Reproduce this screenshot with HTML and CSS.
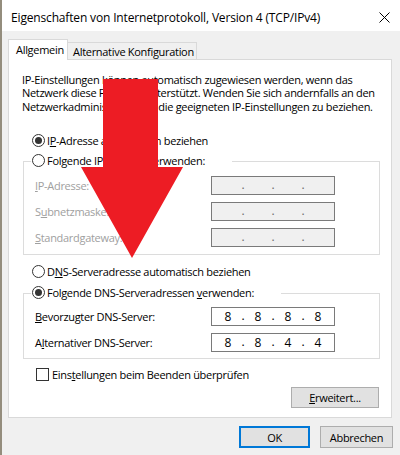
FILE: index.html
```html
<!DOCTYPE html>
<html lang="de">
<head>
<meta charset="utf-8">
<title>Eigenschaften von Internetprotokoll, Version 4 (TCP/IPv4)</title>
<link rel="stylesheet" href="styles.css">
</head>
<body>
<div class="window">
  <div class="titlebar">
    <span class="title">Eigenschaften von Internetprotokoll, Version 4 (TCP/IPv4)</span>
    <svg class="close" width="11" height="11" viewBox="0 0 11 11"><path d="M0.5 0.5 L10.5 10.5 M10.5 0.5 L0.5 10.5" stroke="#000" stroke-width="1" fill="none"/></svg>
  </div>
  <div class="content">
    <div class="tabs">
      <div class="tab active">Allgemein</div>
      <div class="tab">Alternative Konfiguration</div>
    </div>
    <div class="panel">
      <p class="intro">IP-Einstellungen können automatisch zugewiesen werden, wenn das<br>Netzwerk diese Funktion unterstützt. Wenden Sie sich andernfalls an den<br>Netzwerkadministrator, um die geeigneten IP-Einstellungen zu beziehen.</p>

      <div class="radio-row first">
        <span class="radio checked"></span>
        <span>I<u>P</u>-Adresse automatisch beziehen</span>
      </div>

      <div class="group ip-group">
        <div class="legend">
          <span class="radio"></span>
          <span>Folgende IP-Adresse <u>v</u>erwenden:</span>
        </div>
        <div class="field-row">
          <span class="label disabled"><u>I</u>P-Adresse:</span>
          <div class="ip disabled"><span></span><span class="dot">.</span><span></span><span class="dot">.</span><span></span><span class="dot">.</span><span></span></div>
        </div>
        <div class="field-row">
          <span class="label disabled">S<u>u</u>bnetzmaske:</span>
          <div class="ip disabled"><span></span><span class="dot">.</span><span></span><span class="dot">.</span><span></span><span class="dot">.</span><span></span></div>
        </div>
        <div class="field-row">
          <span class="label disabled"><u>S</u>tandardgateway:</span>
          <div class="ip disabled"><span></span><span class="dot">.</span><span></span><span class="dot">.</span><span></span><span class="dot">.</span><span></span></div>
        </div>
      </div>

      <div class="radio-row dns-auto">
        <span class="radio"></span>
        <span>D<u>N</u>S-Serveradresse automatisch beziehen</span>
      </div>

      <div class="group dns-group">
        <div class="legend">
          <span class="radio checked"></span>
          <span>Folgende DNS-Serveradressen <u>v</u>erwenden:</span>
        </div>
        <div class="field-row">
          <span class="label"><u>B</u>evorzugter DNS-Server:</span>
          <div class="ip"><span>8</span><span class="dot">.</span><span>8</span><span class="dot">.</span><span>8</span><span class="dot">.</span><span>8</span></div>
        </div>
        <div class="field-row">
          <span class="label">A<u>l</u>ternativer DNS-Server:</span>
          <div class="ip"><span>8</span><span class="dot">.</span><span>8</span><span class="dot">.</span><span>4</span><span class="dot">.</span><span>4</span></div>
        </div>
      </div>

      <div class="check-row">
        <span class="checkbox"></span>
        <span>Eins<u>t</u>ellungen beim Beenden überprüfen</span>
      </div>

      <div class="panel-actions">
        <button class="btn advanced"><u>E</u>rweitert...</button>
      </div>
    </div>
    <div class="actions">
      <button class="btn ok">OK</button>
      <button class="btn cancel">Abbrechen</button>
    </div>
  </div>
</div>
<svg class="arrow" width="400" height="455" viewBox="0 0 400 455"><polygon points="103,79 158,79 158,167 183,167 132,258 81,167 103,167" fill="#ed1c24"/></svg>
</body>
</html>
```

FILE: styles.css
```css
body {
  margin: 0;
  width: 400px;
  height: 455px;
  overflow: hidden;
  position: relative;
  background: #f0f0f0;
  font-family: "Open Sans", "Noto Sans", "DejaVu Sans", sans-serif;
  font-size: 11px;
  letter-spacing: -0.3px;
  color: #000;
}

.window {
  height: 455px;
  box-sizing: border-box;
  border-left: 2px solid #948d7d;
  display: flex;
  flex-direction: column;
}

.titlebar {
  height: 31px;
  box-sizing: border-box;
  padding: 4px 10px 0 9px;
  background: #fff;
  display: flex;
  align-items: center;
  justify-content: space-between;
}

.title {
  white-space: nowrap;
  font-size: 12px;
  letter-spacing: -0.16px;
}

.close {
  display: block;
}

.content {
  padding: 8px 0 0 6px;
}

.tabs {
  display: flex;
  align-items: flex-end;
  height: 20px;
}

.tab {
  box-sizing: border-box;
  height: 17px;
  width: 130px;
  margin-left: -1px;
  padding-left: 5px;
  border: 1px solid #d9d9d9;
  border-bottom: none;
  background: #f0f0f0;
  display: flex;
  align-items: center;
  white-space: nowrap;
}

.tab.active {
  width: 60px;
  height: 21px;
  margin-left: 0;
  margin-bottom: -1px;
  padding-left: 7px;
  background: #fff;
  position: relative;
  z-index: 1;
  padding-bottom: 1px;
}

.panel {
  box-sizing: border-box;
  width: 384px;
  height: 359px;
  border: 1px solid #d9d9d9;
  background: #fff;
  padding-left: 13px;
  display: flex;
  flex-direction: column;
  align-items: flex-start;
}

.intro {
  margin: 13px 0 0;
  line-height: 13.33px;
  white-space: nowrap;
}

.radio-row,
.check-row,
.legend {
  display: flex;
  align-items: center;
  height: 16px;
  white-space: nowrap;
}

.radio-row {
  margin-left: 10px;
  gap: 2px;
}

.radio-row.first {
  margin-top: 20px;
}

.radio-row.dns-auto {
  margin-top: 9px;
}

.radio {
  box-sizing: border-box;
  width: 13px;
  height: 13px;
  border: 1px solid #333;
  border-radius: 50%;
  background: #fff;
  display: flex;
  align-items: center;
  justify-content: center;
  flex: none;
}

.radio.checked::after {
  content: "";
  width: 7px;
  height: 7px;
  border-radius: 50%;
  background: #333;
}

.group {
  box-sizing: border-box;
  width: 357px;
  margin-left: 1px;
  border: 1px solid #dcdcdc;
  display: flex;
  flex-direction: column;
  align-items: flex-start;
}

.ip-group {
  margin-top: 12px;
  padding-bottom: 7px;
}

.dns-group {
  margin-top: 13px;
  padding-bottom: 6px;
}

.legend {
  margin-top: -9px;
  margin-left: 7px;
  padding: 0 27px 0 1px;
  background: #fff;
  gap: 2px;
}

.field-row {
  display: flex;
  align-items: center;
  height: 19px;
  margin-top: 7px;
  padding-left: 11px;
}

.ip-group .field-row:nth-child(2) {
  margin-top: 7px;
}

.dns-group .field-row:nth-child(2) {
  margin-top: 6px;
}

.label {
  width: 176px;
  white-space: nowrap;
}

.label.disabled {
  color: #a0a0a0;
}

.ip {
  box-sizing: border-box;
  width: 124px;
  height: 19px;
  border: 1px solid #7a7a7a;
  background: #fff;
  padding-left: 3px;
  display: grid;
  grid-template-columns: 26px 4px 26px 4px 26px 4px 26px;
  align-items: center;
  text-align: center;
  letter-spacing: 0;
  font-size: 12px;
}

.ip.disabled {
  background: #f0f0f0;
  color: #6d6d6d;
}

.dot {
  line-height: 1;
}

.check-row {
  margin-top: 8px;
  margin-left: 14px;
  gap: 3px;
}

.checkbox {
  box-sizing: border-box;
  width: 13px;
  height: 13px;
  border: 1px solid #333;
  background: #fff;
  flex: none;
}

.panel-actions {
  align-self: stretch;
  display: flex;
  justify-content: flex-end;
  padding-right: 12px;
  margin-top: 4px;
}

.btn {
  font: inherit;
  letter-spacing: inherit;
  color: #000;
  box-sizing: border-box;
  height: 21px;
  padding: 0;
  background: #e1e1e1;
  border: 1px solid #adadad;
}

.btn.advanced {
  width: 88px;
}

.actions {
  display: flex;
  justify-content: flex-end;
  gap: 10px;
  margin-top: 8px;
  padding-right: 7px;
}

.btn.ok {
  width: 71px;
  height: 22px;
  border: 2px solid #0078d7;
}

.btn.cancel {
  width: 73px;
  height: 22px;
}

.arrow {
  position: absolute;
  left: 0;
  top: 0;
  pointer-events: none;
}
```
